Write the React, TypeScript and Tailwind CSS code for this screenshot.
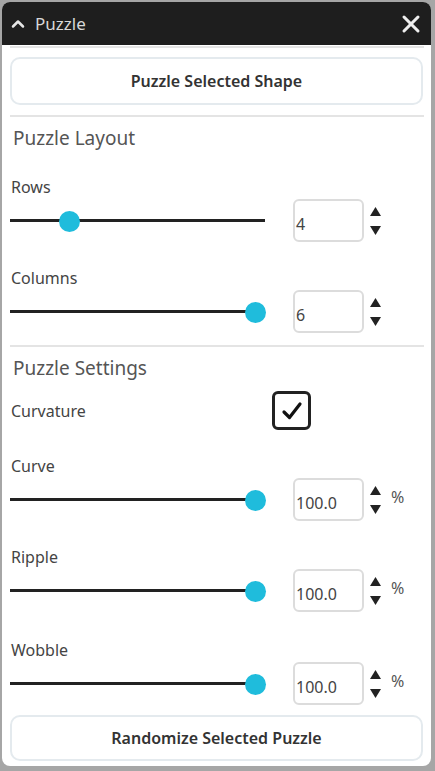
import { ChevronUp, X } from "lucide-react";

const font = { fontFamily: '"Segoe UI", "Noto Sans", sans-serif' };

function Slider({ value }: { value: number }) {
  // value 0..1 → thumb center moves from 10px to 245px
  const left = 10 + value * 235;
  return (
    <div className="relative w-[255px] h-[22px] flex items-center">
      <div className="w-full h-[3px] bg-[#222]" />
      <div
        className="absolute top-[1px] w-[21px] h-[21px] -ml-[10px] rounded-full bg-[#1fbcdc]"
        style={{ left }}
      />
    </div>
  );
}

function Spinner() {
  return (
    <div className="flex flex-col items-center gap-[10px] ml-[6px] w-[11px]">
      <svg width="11" height="9" viewBox="0 0 11 9">
        <path d="M5.5 0 L11 9 L0 9 Z" fill="#222" />
      </svg>
      <svg width="11" height="9" viewBox="0 0 11 9">
        <path d="M0 0 L11 0 L5.5 9 Z" fill="#222" />
      </svg>
    </div>
  );
}

function SliderRow({ value, text, percent }: { value: number; text: string; percent?: boolean }) {
  return (
    <div className="flex items-center h-[43px] mt-[2px]">
      <Slider value={value} />
      <div className="ml-[28px] w-[71px] h-[43px] rounded-[6px] border-2 border-[#dcdcdc] bg-white flex items-center pl-[1px] pt-[6px] text-[16px] text-[#444]">
        {text}
      </div>
      <Spinner />
      {percent && <span className="ml-[10px] text-[16px] text-[#555] -mt-[6px]">%</span>}
    </div>
  );
}

function Label({ children, mt }: { children: string; mt: string }) {
  return <div className={`${mt} h-[20px] leading-[20px] text-[16px] text-[#444] pl-[1px]`}>{children}</div>;
}

function Heading({ children }: { children: string }) {
  return (
    <div className="mt-[7px] h-[28px] leading-[28px] text-[19px] text-[#555] pl-[3px]">{children}</div>
  );
}

function Divider({ mt }: { mt: string }) {
  return <div className={`${mt} h-[2px] bg-[#e4e4e4] mr-[-1px]`} />;
}

function WideButton({ children, mt, h }: { children: string; mt: string; h: string }) {
  return (
    <button
      className={`${mt} ${h} w-full rounded-[10px] border-2 border-[#e4eaee] bg-white text-[16px] font-semibold text-[#333]`}
    >
      {children}
    </button>
  );
}

export default function App() {
  return (
    <div className="w-[435px] h-[771px] bg-[#a6a6a6] pt-[2px] pl-[2px]" style={font}>
      <div className="w-[429px] h-[764px] bg-white rounded-[8px] overflow-hidden flex flex-col">
        {/* Title bar */}
        <div className="h-[43px] bg-[#1e1e1e] flex items-center px-[6px] shrink-0">
          <ChevronUp className="w-[20px] h-[20px] text-[#e6e6e6]" strokeWidth={3} />
          <span className="ml-[7px] text-[17px] text-[#d8d8d8]">Puzzle</span>
          <X className="ml-auto w-[28px] h-[28px] text-[#eeeeee]" strokeWidth={2.6} />
        </div>

        <div className="px-[8px] flex flex-col">
          <Divider mt="mt-[1px]" />
          <WideButton mt="mt-[9px]" h="h-[48px]">
            Puzzle Selected Shape
          </WideButton>

          <Divider mt="mt-[10px]" />
          <Heading>Puzzle Layout</Heading>

          <Label mt="mt-[25px]">Rows</Label>
          <SliderRow value={0.21} text="4" />

          <Label mt="mt-[26px]">Columns</Label>
          <SliderRow value={1} text="6" />

          <Divider mt="mt-[12px]" />
          <Heading>Puzzle Settings</Heading>

          <div className="mt-[9px] h-[39px] flex items-center">
            <span className="w-[262px] text-[16px] text-[#444] pl-[1px]">Curvature</span>
            <div className="w-[39px] h-[39px] rounded-[6px] border-[3px] border-[#222] flex items-center justify-center">
              <svg width="22" height="20" viewBox="0 0 22 20">
                <path
                  d="M3 11 L8.5 16.5 L19 3"
                  fill="none"
                  stroke="#111"
                  strokeWidth="3.2"
                  strokeLinecap="round"
                  strokeLinejoin="round"
                />
              </svg>
            </div>
          </div>

          <Label mt="mt-[26px]">Curve</Label>
          <SliderRow value={1} text="100.0" percent />

          <Label mt="mt-[26px]">Ripple</Label>
          <SliderRow value={1} text="100.0" percent />

          <Label mt="mt-[28px]">Wobble</Label>
          <SliderRow value={1} text="100.0" percent />

          <WideButton mt="mt-[10px]" h="h-[46px]">
            Randomize Selected Puzzle
          </WideButton>
        </div>
      </div>
    </div>
  );
}
